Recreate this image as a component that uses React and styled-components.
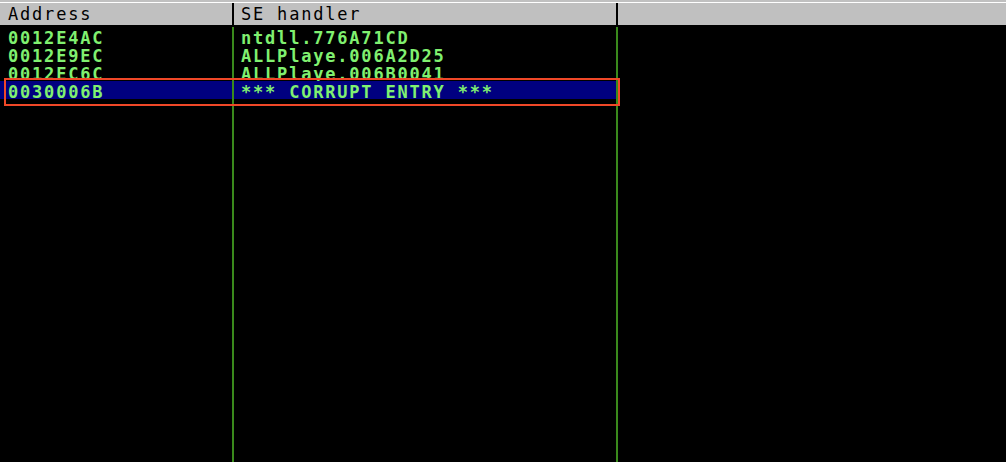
import React from "react";
import styled, { createGlobalStyle } from "styled-components";

const GlobalStyle = createGlobalStyle`
  html, body { margin: 0; padding: 0; background: #000; }
  body { overflow: hidden; }
`;

const rows = [
  { address: "0012E4AC", handler: "ntdll.776A71CD" },
  { address: "0012E9EC", handler: "ALLPlaye.006A2D25" },
  { address: "0012EC6C", handler: "ALLPlaye.006B0041" },
  { address: "0030006B", handler: "*** CORRUPT ENTRY ***", selected: true },
];

const App = () => {
  return (
    <Window>
      <GlobalStyle />
      {/* column header */}
      <HeaderStrip>
        <HeaderRow>
          <HeadCell $w={234}>Address</HeadCell>
          <HeadCell $w={384}>SE handler</HeadCell>
          <HeadFill />
        </HeaderRow>
      </HeaderStrip>
      {/* chain rows */}
      <Body>
        {rows.map((r) => (
          <Row key={r.address}>
            <Cell $w={234} $selected={r.selected}>{r.address}</Cell>
            <Cell $w={384} $selected={r.selected}>{r.handler}</Cell>
            {r.selected && <Marker />}
          </Row>
        ))}
        <Filler>
          <Cell $w={234} />
          <Cell $w={384} />
        </Filler>
      </Body>
    </Window>
  );
};

export default App;

const Window = styled.div`
  width: 100vw;
  height: 100vh;
  display: flex;
  flex-direction: column;
  background: #000;
  font-family: "DejaVu Sans Mono", "Liberation Mono", monospace;
  font-size: 17px;
  letter-spacing: 1.8px;
`;

const HeaderStrip = styled.div`
  background: #c0c0c0;
  padding-top: 2px;
`;

const HeaderRow = styled.div`
  display: flex;
  height: 24px;
  border-top: 1px solid #ffffff;
  box-sizing: border-box;
  border-bottom: 1px solid #000;
`;

const HeadCell = styled.div`
  width: ${(p) => p.$w}px;
  box-sizing: border-box;
  border-right: 2px solid #000;
  padding-left: ${(p) => (p.$w === 234 ? 8 : 7)}px;
  line-height: 23px;
  color: #000;
  white-space: nowrap;
  overflow: hidden;
`;

const HeadFill = styled.div`
  flex: 1;
`;

const Body = styled.div`
  flex: 1;
  display: flex;
  flex-direction: column;
  padding-top: 1px;
`;

const Row = styled.div`
  position: relative;
  display: flex;
  height: 18px;
`;

const Cell = styled.div`
  width: ${(p) => p.$w}px;
  box-sizing: border-box;
  border-right: 2px solid #3a8a1c;
  padding-left: ${(p) => (p.$w === 234 ? 8 : 7)}px;
  padding-top: 2px;
  line-height: 18px;
  font-weight: bold;
  color: #80f070;
  white-space: nowrap;
  background: ${(p) => (p.$selected ? "#000080" : "transparent")};
  height: 100%;
`;

const Filler = styled.div`
  flex: 1;
  display: flex;
`;

const Marker = styled.div`
  position: absolute;
  left: 4px;
  top: -3px;
  width: 616px;
  height: 28px;
  box-sizing: border-box;
  border: 2px solid #f04828;
  pointer-events: none;
`;
